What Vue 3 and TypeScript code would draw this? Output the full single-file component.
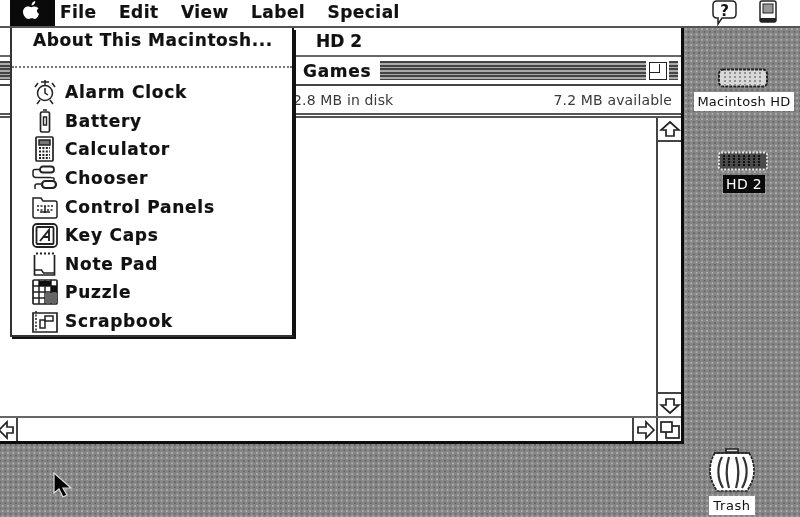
<script setup lang="ts">
const menus: string[] = ['File', 'Edit', 'View', 'Label', 'Special']
const items: { id: string; label: string }[] = [
  { id: 'clock', label: 'Alarm Clock' },
  { id: 'battery', label: 'Battery' },
  { id: 'calc', label: 'Calculator' },
  { id: 'chooser', label: 'Chooser' },
  { id: 'panels', label: 'Control Panels' },
  { id: 'keys', label: 'Key Caps' },
  { id: 'note', label: 'Note Pad' },
  { id: 'puzzle', label: 'Puzzle' },
  { id: 'scrap', label: 'Scrapbook' },
]
</script>

<template>
  <div class="desktop">
    <header class="menubar">
      <div class="apple">
        <svg class="apple-logo" width="26" height="22" viewBox="0 0 26 22">
          <path fill="#fff" d="M5 12c0-4 3-6 6-5.500 1 .2 1.500.7 2.500.7s1.800-.7 3-.7c1.700 0 3.200.8 4 2-2 1-2.200 4 .5 5.200-.8 2.800-2.500 5.300-4.200 5.300-1.100 0-1.800-.7-3-.7s-1.900.7-3 .7C8 19 5 15.500 5 12z" />
          <path fill="#fff" d="M13.500 5.500c0-2.200 1.500-4 3.800-4.500.1 2.300-1.500 4.300-3.800 4.500z" />
        </svg>
      </div>
      <nav class="menus">
        <span v-for="m in menus" :key="m">{{ m }}</span>
      </nav>
      <div class="status">
        <svg width="28" height="26" viewBox="0 0 28 26">
          <path fill="#fff" stroke="#222" stroke-width="1.500" d="M6 1h15q4 0 4 4v9q0 4-4 4H11l-4 6v-6H6q-4 0-4-4V5q0-4 4-4z" />
          <text x="13.500" y="16" text-anchor="middle" class="q">?</text>
        </svg>
        <svg width="20" height="24" viewBox="0 0 20 24">
          <rect x="2" y="1" width="16" height="21" rx="2" fill="#fff" stroke="#222" stroke-width="1.500" />
          <rect x="5" y="4" width="10" height="9" fill="#999" stroke="#222" />
          <rect x="2" y="18" width="16" height="4" fill="#222" />
        </svg>
      </div>
    </header>

    <section class="window">
      <div class="back-title">HD 2</div>
      <div class="title-bar">
        <span class="stripes stripes-left"></span>
        <span class="title">Games</span>
        <span class="stripes"></span>
        <span class="zoom-box"><span class="zoom-inner"></span></span>
        <span class="stripes stripes-end"></span>
      </div>
      <div class="info">
        <span>2.8 MB in disk</span>
        <span>7.2 MB available</span>
      </div>
      <div class="body">
        <div class="content"></div>
        <div class="vscroll">
          <div class="arrow-box">
            <svg width="22" height="19" viewBox="0 0 22 19"><path fill="#fff" stroke="#222" stroke-width="1.700" d="M11 2 20 10h-5v6H7v-6H2z" /></svg>
          </div>
          <div class="track"></div>
          <div class="arrow-box arrow-bottom">
            <svg width="22" height="19" viewBox="0 0 22 19"><path fill="#fff" stroke="#222" stroke-width="1.700" d="M11 17 20 9h-5V3H7v6H2z" /></svg>
          </div>
        </div>
      </div>
      <div class="hscroll">
        <div class="arrow-left">
          <svg width="18" height="20" viewBox="0 0 18 20"><path fill="#fff" stroke="#222" stroke-width="1.700" d="M1 10 9 2v5h6v6H9v5z" /></svg>
        </div>
        <div class="htrack"></div>
        <div class="arrow-right">
          <svg width="22" height="20" viewBox="0 0 22 20"><path fill="#fff" stroke="#222" stroke-width="1.700" d="M20 10 12 2v5H4v6h8v5z" /></svg>
        </div>
        <div class="grow">
          <svg width="22" height="20" viewBox="0 0 22 20">
            <rect x="7" y="6" width="13" height="12" fill="#fff" stroke="#222" stroke-width="1.700" />
            <rect x="2" y="2" width="11" height="10" fill="#fff" stroke="#222" stroke-width="1.700" />
          </svg>
        </div>
      </div>
    </section>

    <aside class="apple-menu">
      <div class="about">About This Macintosh...</div>
      <div class="separator"></div>
      <ul class="list">
        <li v-for="it in items" :key="it.id">
          <svg class="ico" width="26" height="26" viewBox="0 0 26 26" fill="none" stroke="#222" stroke-width="1.500">
            <g v-if="it.id === 'clock'">
              <circle cx="13" cy="14" r="7.500" />
              <path d="M13 9v5l3 2M6 4 3 8M20 4l3 4M9 3h8M13 1v5M8 21l-3 4M18 21l3 4" />
            </g>
            <g v-else-if="it.id === 'battery'">
              <rect x="8.500" y="4" width="9" height="20" rx="1.500" stroke-width="1.700" />
              <path d="M11 2h4M11.500 9v8h3V9z" />
            </g>
            <g v-else-if="it.id === 'calc'">
              <rect x="4" y="1" width="17" height="24" rx="1" stroke-width="1.700" />
              <rect x="7" y="4" width="11" height="5" fill="#777" />
              <path stroke-dasharray="2 1.400" stroke-width="1.800" d="M7 12h11M7 15.500h11M7 19h11M7 22h11" />
            </g>
            <g v-else-if="it.id === 'chooser'">
              <rect x="8" y="1.500" width="14" height="6" rx="3" stroke-width="1.800" />
              <rect x="10" y="16" width="14" height="7" rx="3.500" stroke-width="2.200" />
              <path d="M8 4.500H3q-2 0-2 2v3q0 3 3 3h14q4 0 4 1v2M10 19H5q-2 0-2 2v3" />
            </g>
            <g v-else-if="it.id === 'panels'">
              <path d="M1 7V4h8l2 3h12q2 0 2 2v13q0 2-2 2H3q-2 0-2-2z" />
              <path stroke-dasharray="2 1.500" d="M5 12h16M5 16h6M15 16h6" />
              <path d="M13 12v7M8 18h10" stroke-width="1.600" />
            </g>
            <g v-else-if="it.id === 'keys'">
              <rect x="1" y="2" width="24" height="23" rx="4" stroke-width="1.800" />
              <rect x="4.500" y="5" width="17" height="17" rx="1" stroke-width="1.800" />
              <path d="M8 19 17 8v11M11 15h6" stroke-width="1.900" />
            </g>
            <g v-else-if="it.id === 'note'">
              <path d="M2.500 4v20h20V4" stroke-width="1.700" />
              <path stroke-dasharray="2 2" stroke-width="2" d="M4 2.500h18" />
              <path d="M2.500 19h7l2 3h11" />
            </g>
            <g v-else-if="it.id === 'puzzle'">
              <rect x="1" y="1" width="24" height="24" rx="1" stroke-width="1.700" />
              <path d="M7 1v24M13 1v24M19 1v24M1 7h24M1 13h24M1 19h24" />
              <path fill="#111" stroke="none" d="M7 2h12v5h6v6H19V7H7z" />
              <path fill="#666" stroke="none" d="M13 14h12v10H13z" />
            </g>
            <g v-else>
              <path d="M1 5h24v19H1z" stroke-width="1.700" />
              <path d="M4 3v21" stroke-dasharray="2 1.500" />
              <rect x="13" y="8" width="8" height="5" />
              <rect x="8" y="12" width="5" height="8" />
            </g>
          </svg>
          <span>{{ it.label }}</span>
        </li>
      </ul>
    </aside>

    <div class="disk disk-a">
      <svg width="54" height="20" viewBox="0 0 54 20">
        <rect x="2" y="1.500" width="48" height="17" rx="4" fill="#d8d8d8" stroke="#222" stroke-width="2" stroke-dasharray="3 1" />
        <path stroke="#8a8a8a" stroke-width="1.800" stroke-dasharray="2 2" d="M8 4v13M13 4v13M18 4v13M23 4v13M28 4v13M33 4v13M38 4v13M43 4v13" />
      </svg>
      <span class="label-a">Macintosh HD</span>
    </div>
    <div class="disk disk-b">
      <svg width="54" height="20" viewBox="0 0 54 20">
        <rect x="2" y="1.500" width="48" height="17" rx="2" fill="#4a4a4a" stroke="#e8e8e8" stroke-width="1.800" stroke-dasharray="2 1.500" />
        <path stroke="#111" stroke-width="2" stroke-dasharray="2 1" d="M7 4v12M12 4v12M17 4v12M22 4v12M27 4v12M32 4v12M37 4v12M42 4v12" />
      </svg>
      <span class="label-b">HD 2</span>
    </div>
    <div class="disk disk-t">
      <svg width="46" height="52" viewBox="0 0 46 52">
        <path fill="#fff" stroke="#222" stroke-width="1.700" stroke-dasharray="3 1" d="M6 9C2 15 1 21 1 27s2 12 7 20h30c5-8 7-14 7-20s-1-12-5-18z" />
        <path fill="none" stroke="#333" stroke-width="2.200" d="M13 13c-5 9-5 21 1 31M20 13c-3 10-3 21 0 31M27 13c3 10 3 21 0 31M34 13c5 9 5 21-1 31" />
        <path fill="#ddd" stroke="#222" stroke-width="1.700" d="M5 9h36M17 5h12v3H17z" />
      </svg>
      <span class="label-t">Trash</span>
    </div>

    <svg class="cursor" width="22" height="30" viewBox="0 0 22 30">
      <path fill="#000" stroke="#ddd" stroke-width="1.200" d="M2 2v20l5-4 4 8 4-2-4-7h8z" />
    </svg>
  </div>
</template>

<style>
html, body { margin: 0; padding: 0; background: #888; overflow: hidden; }
</style>

<style scoped>
.desktop {
  position: relative;
  width: 800px;
  height: 517px;
  overflow: hidden;
  background-color: #868686;
  background-image:
    radial-gradient(circle, #aeaeae 0.8px, transparent 1.100px),
    radial-gradient(circle, #666 0.8px, transparent 1.100px);
  background-size: 5.300px 5.300px, 5.300px 5.300px;
  background-position: 0 0, 2.650px 2.650px;
  font-family: "Liberation Sans", sans-serif;
  color: #111;
  filter: blur(0.4px);
}
.menubar {
  display: flex;
  align-items: flex-start;
  height: 26px;
  background: #fff;
  border-bottom: 2px solid #555;
}
.apple {
  display: flex;
  align-items: flex-start;
  justify-content: center;
  width: 45px;
  height: 26px;
  margin-left: 10px;
  background: #0a0a0a;
}
.apple-logo { margin: 0 3px 0 0; }
.menus {
  display: flex;
  gap: 22.400px;
  margin-left: 5px;
  height: 24px;
  align-items: center;
  font-family: "DejaVu Sans", sans-serif;
  font-weight: 700;
  font-size: 17px;
  letter-spacing: 0.450px;
  -webkit-text-stroke: 0.200px #111;
}
.status {
  display: flex;
  align-items: flex-start;
  gap: 19px;
  margin-left: auto;
  margin-right: 22px;
}
.q { font: 700 15px "DejaVu Sans", sans-serif; fill: #111; stroke: none; }
.window {
  position: absolute;
  left: -6px;
  top: 28px;
  width: 687px;
  height: 413px;
  display: flex;
  flex-direction: column;
  background: #fff;
  border-right: 3px solid #0d0d0d;
  border-bottom: 3px solid #0d0d0d;
}
.back-title {
  height: 27px;
  padding-left: 322px;
  font: 700 17px/27px "DejaVu Sans", sans-serif;
  border-bottom: 2px solid #666;
  -webkit-text-stroke: 0.200px #111;
}
.title-bar {
  display: flex;
  align-items: center;
  height: 27px;
  border-bottom: 2px solid #444;
  padding: 0 2px 0 0;
}
.stripes {
  flex: 1;
  height: 19px;
  background: repeating-linear-gradient(#444 0 2px, #aaa 2px 3.600px);
}
.stripes-left { flex: none; width: 300px; }
.stripes-end { flex: none; width: 9px; margin-right: 1px; }
.title {
  padding: 0 9px 0 9px;
  font: 700 17px "DejaVu Sans", sans-serif;
  letter-spacing: 0.700px;
  -webkit-text-stroke: 0.200px #111;
}
.zoom-box {
  flex: none;
  width: 16px;
  height: 14px;
  padding: 1px 0;
  background: #fff;
  border: 1.500px solid #222;
  margin: 0 2px 0 3px;
}
.zoom-inner {
  display: block;
  width: 9px;
  height: 8px;
  border-right: 1.500px solid #222;
  border-bottom: 1.500px solid #222;
}
.info {
  display: flex;
  justify-content: space-between;
  align-items: center;
  height: 27px;
  padding: 0 9px 0 299px;
  font: 400 14px "DejaVu Sans", sans-serif;
  letter-spacing: 0.150px;
  color: #3a3a3a;
  border-bottom: 5px double #555;
}
.body { flex: 1; display: flex; min-height: 0; }
.content { flex: 1; background: #fff; }
.vscroll {
  width: 23px;
  display: flex;
  flex-direction: column;
  border-left: 2px solid #444;
  background: #fff;
}
.arrow-box {
  height: 22px;
  display: flex;
  align-items: center;
  justify-content: center;
  border-bottom: 2px solid #444;
}
.arrow-bottom { border-bottom: none; border-top: 2px solid #444; }
.track { flex: 1; }
.hscroll {
  display: flex;
  align-items: center;
  height: 23px;
  border-top: 2px solid #666;
}
.arrow-left {
  width: 24px;
  height: 23px;
  display: flex;
  align-items: center;
  justify-content: flex-end;
  border-right: 2px solid #444;
  box-sizing: border-box;
}
.htrack { flex: 1; }
.arrow-right {
  width: 24px;
  height: 23px;
  display: flex;
  align-items: center;
  justify-content: center;
  border-left: 2px solid #444;
  box-sizing: border-box;
}
.grow {
  width: 25px;
  height: 23px;
  display: flex;
  align-items: center;
  justify-content: center;
  border-left: 2px solid #444;
  box-sizing: border-box;
}
.apple-menu {
  position: absolute;
  left: 10px;
  top: 28px;
  width: 280px;
  height: 307px;
  background: #fff;
  border-left: 2px solid #333;
  border-right: 2px solid #111;
  border-bottom: 2px solid #333;
  box-shadow: 2px 2px 0 #111;
}
.about {
  height: 26px;
  padding: 0 0 0 21px;
  font: 700 17px/24px "DejaVu Sans", sans-serif;
  letter-spacing: 0.580px;
  -webkit-text-stroke: 0.200px #111;
}
.separator {
  height: 0;
  margin-top: 12px;
  border-top: 2px dotted #777;
}
.list {
  list-style: none;
  margin: 10px 0 0;
  padding: 0;
}
.list li {
  display: flex;
  align-items: center;
  height: 28.600px;
  padding-left: 20px;
  font: 700 17px "DejaVu Sans", sans-serif;
  letter-spacing: 0.750px;
  -webkit-text-stroke: 0.200px #111;
}
.ico { flex: none; margin-right: 7px; }
.disk {
  position: absolute;
  display: flex;
  flex-direction: column;
  align-items: center;
  font: 400 13px "DejaVu Sans", sans-serif;
}
.disk-a { left: 693px; top: 68px; width: 102px; }
.disk-b { left: 693px; top: 151px; width: 102px; }
.disk-t { left: 708px; top: 444px; width: 48px; }
.label-a { margin-top: 4px; background: #fff; padding: 2px 3px; white-space: nowrap; letter-spacing: 0.250px; }
.label-b { margin-top: 4px; background: #0a0a0a; color: #fff; padding: 1px 3px; font-size: 14px; letter-spacing: 0.300px; }
.label-t { background: #fff; padding: 2px 4px; letter-spacing: 0.600px; font-size: 13px; }
.cursor { position: absolute; left: 52px; top: 471px; }
</style>
